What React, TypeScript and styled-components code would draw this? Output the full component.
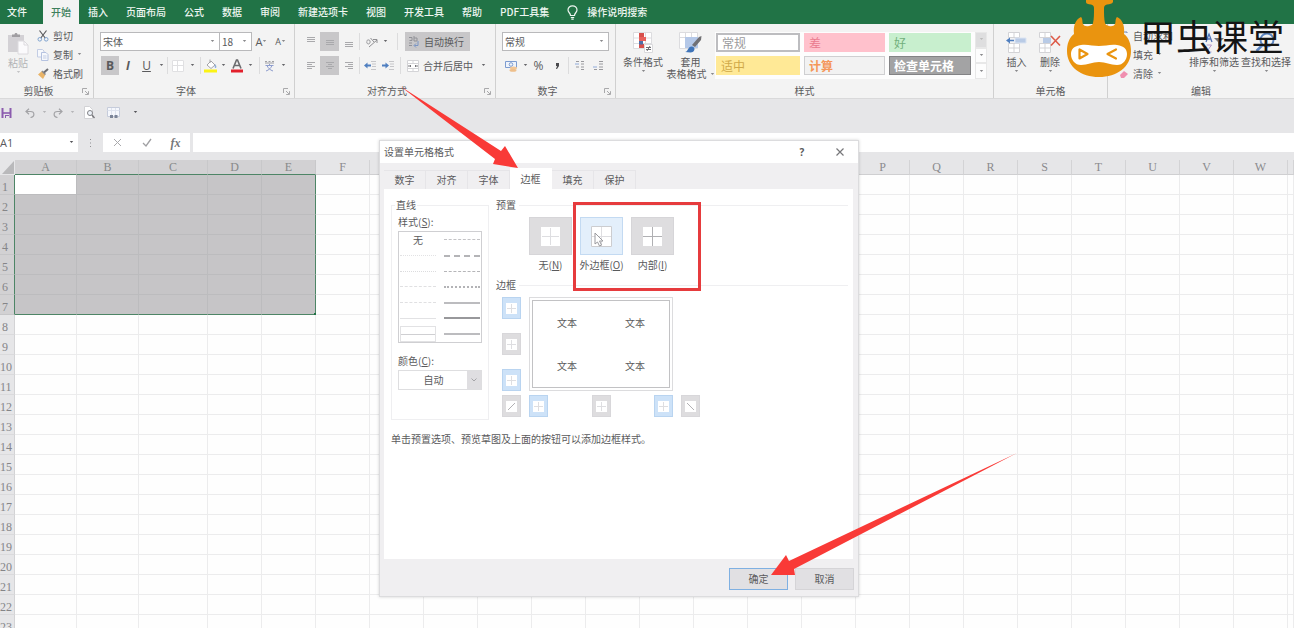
import React from "react";
import styled, { createGlobalStyle, css } from "styled-components";

const Global = createGlobalStyle`
  *, *::before, *::after { box-sizing: border-box; }
  html, body { margin: 0; padding: 0; }
  body {
    font-family: "Noto Sans CJK SC", "Noto Sans", sans-serif;
    font-size: 10px;
    line-height: 12px;
    color: #5a5a5c;
    background: #e6e6e8;
    overflow: hidden;
  }
  button, input, select {
    font: inherit;
    color: inherit;
    margin: 0;
    padding: 0;
    border: 0;
    border-radius: 0;
    background: transparent;
  }
  svg { display: block; flex: none; }
`;

const Page = styled.div`
  position: relative;
  display: flex;
  flex-direction: column;
  height: 100vh;
  overflow: hidden;
`;

/* ---------- ribbon tabs ---------- */
const TabBar = styled.nav`
  display: flex;
  align-items: stretch;
  height: 24px;
  flex: none;
  background: #217346;
  color: #eef6f1;
`;
const RibbonTab = styled.button<{ $active?: boolean; $file?: boolean }>`
  flex: none;
  padding: 0 9px;
  font-weight: 500;
  white-space: nowrap;
  ${(p) => p.$file && css`padding: 0 16px 0 7px;`}
  ${(p) => p.$active && css`
    padding: 0 8px;
    background: #f3f3f3;
    color: #3d7f5c;
  `}
`;
const TellMe = styled.button`
  display: flex;
  align-items: center;
  gap: 9px;
  padding: 0 9px;
  font-weight: 500;
`;

/* ---------- ribbon body ---------- */
const Ribbon = styled.div`
  display: flex;
  height: 75px;
  flex: none;
  background: #f3f3f3;
  border-bottom: 1px solid #d9d9da;
`;
const Group = styled.section<{ $w?: number; $tight?: boolean }>`
  display: flex;
  flex-direction: column;
  justify-content: space-between;
  padding: ${(p) => (p.$tight ? 2 : 8)}px 0 1px;
  ${(p) => (p.$w ? css`flex: 0 0 ${p.$w}px;` : css`flex: 1 0 0;`)}
  & + & { border-left: 1px solid #d0d0d0; }
`;
const GroupFoot = styled.div`
  display: flex;
  align-items: center;
  height: 12px;
`;
const GroupName = styled.span`
  flex: 1;
  text-align: center;
`;
const Launcher = styled.button`
  display: flex;
  width: 16px;
  justify-content: center;
`;
const Stack = styled.div<{ $gap?: number }>`
  display: flex;
  flex-direction: column;
  gap: ${(p) => p.$gap ?? 5}px;
`;
const Row = styled.div<{ $pad?: number }>`
  display: flex;
  align-items: center;
  padding-left: ${(p) => p.$pad ?? 0}px;
`;
const Body = styled.div<{ $pad?: number }>`
  display: flex;
  align-items: flex-start;
  padding-left: ${(p) => p.$pad ?? 0}px;
`;
const EditTools = styled(Stack)`
  width: 72px;
`;
const Tool = styled.button<{ $w?: number; $on?: boolean }>`
  display: flex;
  align-items: center;
  justify-content: center;
  width: ${(p) => p.$w ?? 19}px;
  height: 19px;
  font-size: 12px;
  background: ${(p) => (p.$on ? "#c8c7c9" : "transparent")};
`;
const TextTool = styled.button<{ $on?: boolean }>`
  display: flex;
  align-items: center;
  gap: 4px;
  height: 19px;
  padding: 0 6px 0 3px;
  white-space: nowrap;
  background: ${(p) => (p.$on ? "#c8c7c9" : "transparent")};
`;
const BigTool = styled.button<{ $w: number; $dim?: boolean; $drop?: boolean }>`
  display: flex;
  flex-direction: column;
  align-items: center;
  gap: 2px;
  width: ${(p) => p.$w}px;
  padding-top: ${(p) => (p.$drop ? 6 : 0)}px;
  white-space: nowrap;
  color: ${(p) => (p.$dim ? "#b4b4b6" : "inherit")};
`;
const LabelLine = styled.span`
  display: flex;
  align-items: center;
  gap: 3px;
`;
const Rule = styled.i<{ $m?: number }>`
  width: 1px;
  height: 17px;
  margin: 0 ${(p) => p.$m ?? 0}px;
  background: #dcdcdd;
`;
const Letter = styled.span<{ $s?: number; $b?: boolean; $i?: boolean; $u?: boolean }>`
  font-family: "Open Sans", "Noto Sans", sans-serif;
  font-size: ${(p) => p.$s ?? 12}px;
  line-height: 14px;
  font-weight: ${(p) => (p.$b ? 700 : 400)};
  font-style: ${(p) => (p.$i ? "italic" : "normal")};
  text-decoration: ${(p) => (p.$u ? "underline" : "none")};
`;
const FxLabel = styled.span`
  font: italic 700 12px/14px "Liberation Serif", serif;
  color: #77777a;
`;

const SelectBox = styled.span<{ $w: number }>`
  display: grid;
  align-items: center;
  width: ${(p) => p.$w}px;
  height: 19px;
  border: 1px solid #b9b9bb;
  background: #fff;
  & > * { grid-area: 1 / 1; }
  & > svg { justify-self: end; margin-right: 4px; pointer-events: none; }
  & + & { border-left: 0; }
`;
const PlainSelect = styled.select`
  appearance: none;
  width: 100%;
  height: 17px;
  padding-left: 2px;
  outline: none;
`;

const Gallery = styled.div`
  display: flex;
  height: 47px;
  background: #fdfdfd;
`;
const Swatches = styled.div`
  display: grid;
  grid-template-columns: 84px 81px 82px;
  grid-template-rows: 19px 19px;
  gap: 4px;
  padding: 1px 4px 0 1px;
`;
const Swatch = styled.button<{ $bg: string; $fg: string; $edge?: string; $bold?: boolean }>`
  padding-left: 4px;
  text-align: left;
  font-size: 12px;
  line-height: 15px;
  white-space: nowrap;
  background: ${(p) => p.$bg};
  color: ${(p) => p.$fg};
  border: 1px solid ${(p) => p.$edge ?? p.$bg};
  font-weight: ${(p) => (p.$bold ? 700 : 400)};
  &:first-child { border-width: 2px; }
`;
const Scroller = styled.div`
  display: grid;
  grid-template-rows: repeat(3, 1fr);
  width: 12px;
`;
const ScrollBtn = styled.button<{ $off?: boolean }>`
  display: flex;
  align-items: center;
  justify-content: center;
  background: ${(p) => (p.$off ? "#dededf" : "#fdfdfd")};
  border: 1px solid #e8e8e8;
`;

/* ---------- quick access and formula bar ---------- */
const QuickBar = styled.div`
  display: flex;
  align-items: center;
  height: 34px;
  flex: none;
  padding-bottom: 7px;
  background: #e6e6e8;
`;
const HistoryTools = styled.div`
  display: flex;
  padding-left: 7px;
`;
const QuickBtn = styled.button<{ $w: number }>`
  display: flex;
  align-items: center;
  justify-content: center;
  width: ${(p) => p.$w}px;
  height: 18px;
`;
const FormulaBar = styled.div`
  display: flex;
  align-items: stretch;
  height: 27px;
  flex: none;
  padding-bottom: 8px;
  background: #e6e6e8;
`;
const NameBox = styled.label`
  display: flex;
  align-items: center;
  width: 78px;
  padding-right: 4px;
  background: #fff;
`;
const NameInput = styled.input`
  width: 69px;
  font-family: "Open Sans", sans-serif;
  font-size: 11px;
  outline: none;
`;
const Dots = styled.span`
  display: flex;
  align-items: center;
  justify-content: center;
  width: 25px;
`;
const FxTools = styled.div`
  display: flex;
  align-items: center;
  width: 87px;
  background: #fff;
`;
const FormulaInput = styled.input`
  flex: 1;
  min-width: 0;
  margin-left: 3px;
  background: #fff;
  outline: none;
`;

/* ---------- sheet ---------- */
const SheetWrap = styled.main`
  flex: 1;
  min-height: 0;
  overflow: hidden;
  background: #fff;
`;
const Sheet = styled.table`
  table-layout: fixed;
  width: 100%;
  border-collapse: separate;
  border-spacing: 0;
`;
const ColHead = styled.th<{ $sel?: boolean }>`
  height: 15px;
  padding: 1px 0 0;
  font: 400 12px/13px "Liberation Serif", serif;
  color: ${(p) => (p.$sel ? "#87898a" : "#8b8b8e")};
  background: ${(p) => (p.$sel ? "#d2d1d3" : "#e6e6e8")};
  border-right: 1px solid ${(p) => (p.$sel ? "#c8c8ca" : "#d3d3d5")};
  border-bottom: 1px solid ${(p) => (p.$sel ? "#4d8566" : "#cfcfd1")};
`;
const Corner = styled.th`
  padding: 0 0 0 2px;
  background: #e6e6e8;
`;
const RowHead = styled.th<{ $sel?: boolean }>`
  height: 20px;
  padding: 6px 4px 0 0;
  font: 400 12px/13px "Liberation Serif", serif;
  color: #858588;
  background: ${(p) => (p.$sel ? "#d2d1d3" : "#e6e6e8")};
  border-right: 1px solid ${(p) => (p.$sel ? "#4d8566" : "#d3d3d5")};
  border-bottom: 1px solid ${(p) => (p.$sel ? "#c6c6c8" : "#dadadc")};
`;
const Cell = styled.td<{ $sel?: boolean; $active?: boolean; $right?: boolean; $bottom?: boolean }>`
  position: relative;
  height: 20px;
  padding: 0;
  background: ${(p) => (p.$active ? "#fff" : p.$sel ? "#c6c5c7" : "#fefefe")};
  border-right: 1px solid ${(p) => (p.$right ? "#4d8566" : p.$sel ? "#bcbcbe" : "#ececed")};
  border-bottom: 1px solid ${(p) => (p.$bottom ? "#4d8566" : p.$sel ? "#bcbcbe" : "#ececed")};
  ${(p) => p.$right && p.$bottom && css`
    &::after {
      content: "";
      position: absolute;
      right: -2px;
      bottom: -2px;
      width: 3px;
      height: 3px;
      background: #217346;
    }
  `}
`;

/* ---------- dialog ---------- */
const Dialog = styled.section`
  position: absolute;
  left: 379px;
  top: 140px;
  width: 480px;
  display: flex;
  flex-direction: column;
  background: #f0eff1;
  border: 1px solid #dcdcde;
  box-shadow: 0 0 3px rgba(0, 0, 0, 0.18);
`;
const TitleBar = styled.header`
  display: flex;
  align-items: center;
  height: 22px;
  padding: 0 0 0 4px;
  background: #fff;
`;
const Title = styled.h1`
  flex: 1;
  margin: 0;
  font-size: 10px;
  font-weight: 400;
`;
const TitleBtn = styled.button<{ $w: number }>`
  display: flex;
  align-items: center;
  justify-content: center;
  width: ${(p) => p.$w}px;
  height: 20px;
`;
const DialogTabs = styled.div`
  display: flex;
  align-items: flex-end;
  height: 26px;
  padding: 0 4px;
`;
const DialogTab = styled.button<{ $active?: boolean }>`
  width: 42px;
  height: ${(p) => (p.$active ? 21 : 19)}px;
  background: ${(p) => (p.$active ? "#fff" : "#f0eff1")};
  border: 1px solid ${(p) => (p.$active ? "#fff" : "#e6e5e8")};
  border-width: 1px 1px 0 0;
`;
const Panel = styled.div`
  height: 370px;
  margin: 0 5px 0 4px;
  padding: 10px 5px 0 7px;
  background: #fff;
`;
const PanelCols = styled.div`
  display: flex;
  gap: 7px;
`;
const LineBox = styled.fieldset`
  display: flex;
  flex-direction: column;
  width: 98px;
  height: 221px;
  min-width: 0;
  margin: 0;
  padding: 5px 6px 0;
  border: 1px solid #efeff1;
`;
const Legend = styled.legend`
  margin-left: -3px;
  padding: 0 1px;
`;
const StyleList = styled.div`
  display: grid;
  grid-template-columns: 1fr 1fr;
  grid-template-rows: repeat(7, 1fr);
  column-gap: 8px;
  height: 112px;
  margin: 3px 0 12px;
  padding: 0 1px;
  border: 1px solid #cfcfd2;
`;
const StyleOption = styled.button<{ $on?: boolean }>`
  display: flex;
  align-items: center;
  justify-content: center;
  border: ${(p) => (p.$on ? "1px solid #e2e2e4" : "0")};
`;
const Stroke = styled.i<{ $kind: string; $c: string; $h?: number }>`
  width: 100%;
  border-top: ${(p) => p.$h ?? 1}px ${(p) => p.$kind} ${(p) => p.$c};
`;
const ColorSelect = styled.span`
  display: grid;
  align-items: center;
  height: 20px;
  margin-top: 3px;
  border: 1px solid #dedee0;
  & > * { grid-area: 1 / 1; }
  & > i {
    display: flex;
    align-items: center;
    justify-content: center;
    justify-self: end;
    width: 14px;
    height: 18px;
    background: #dfdee1;
    pointer-events: none;
  }
  & select { text-align: center; padding-right: 15px; }
`;
const RightCol = styled.div`
  flex: 1;
  display: flex;
  flex-direction: column;
`;
const Heading = styled.h2`
  display: flex;
  align-items: center;
  gap: 3px;
  margin: 0;
  font-size: 10px;
  font-weight: 400;
  &::after { content: ""; flex: 1; height: 1px; background: #efeff1; }
`;
const Presets = styled.div`
  display: flex;
  gap: 8px;
  padding: 6px 0 8px 33px;
`;
const Preset = styled.button`
  display: flex;
  flex-direction: column;
  align-items: center;
  gap: 4px;
  width: 43px;
  white-space: nowrap;
`;
const PresetFace = styled.span<{ $on?: boolean }>`
  display: flex;
  align-items: center;
  justify-content: center;
  width: 43px;
  height: 38px;
  background: ${(p) => (p.$on ? "#e3effb" : "#dedddf")};
  border: 1px solid ${(p) => (p.$on ? "#c3daf2" : "#d6d5d8")};
`;
const BorderGrid = styled.div`
  display: grid;
  grid-template-columns: 19px 144px 19px;
  grid-template-rows: 94px 22px;
  gap: 4px 8px;
  padding: 6px 0 0 6px;
`;
const SideButtons = styled.div<{ $across?: boolean }>`
  display: flex;
  flex-direction: ${(p) => (p.$across ? "row" : "column")};
  justify-content: space-between;
`;
const EdgeBtn = styled.button<{ $on?: boolean }>`
  display: flex;
  align-items: center;
  justify-content: center;
  width: 19px;
  height: 22px;
  background: ${(p) => (p.$on ? "#cde2f8" : "#dedddf")};
  border: 1px solid ${(p) => (p.$on ? "#b9d4f0" : "#d8d7da")};
`;
const Preview = styled.div`
  grid-column: 2 / 4;
  width: 144px;
  height: 94px;
  padding: 2px;
  border: 1px solid #dcdcde;
`;
const PreviewInner = styled.div`
  display: grid;
  grid-template-columns: 1fr 1fr;
  grid-template-rows: 1fr 1fr;
  place-items: center;
  height: 100%;
  border: 1px solid #c2c2c4;
`;
const Hint = styled.p`
  margin: 13px 0 0;
`;
const Footer = styled.footer`
  display: flex;
  justify-content: flex-end;
  gap: 7px;
  padding: 9px 4px 6px;
`;
const ActionBtn = styled.button<{ $main?: boolean }>`
  width: 59px;
  height: 22px;
  background: #e1e0e3;
  border: 1px solid ${(p) => (p.$main ? "#7fb0e2" : "#d5d4d7")};
`;

/* ---------- overlays ---------- */
const Brand = styled.div`
  position: absolute;
  left: 1066px;
  top: 0;
  display: flex;
  align-items: flex-start;
  gap: 7px;
  pointer-events: none;
`;
const BrandName = styled.span`
  padding-top: 15px;
  font-size: 36px;
  line-height: 40px;
  color: #141414;
  white-space: nowrap;
`;
const Marks = styled.svg`
  position: absolute;
  left: 0;
  top: 0;
  width: 100%;
  height: 100%;
  pointer-events: none;
`;

/* ---------- icons ---------- */
const Ico = ({ w = 12, h = 12, children }: { w?: number; h?: number; children: React.ReactNode }) => (
  <svg width={w} height={h} viewBox={`0 0 ${w} ${h}`} fill="none" aria-hidden="true">{children}</svg>
);
const Caret = ({ c = "#8a8a8d" }: { c?: string }) => (
  <Ico w={5} h={3}><path d="M.8 0h3.4L2.5 2z" fill={c} /></Ico>
);
const CaretBtn = ({ w }: { w: number }) => <Tool $w={w} aria-label="更多"><Caret c="#66666a" /></Tool>;
const LauncherIcon = () => (
  <Ico w={7} h={7}><path d="M.5 5V.5H5M3 3l3 3M6.5 3.2v3.3H3.2" stroke="#a9a9ab" /></Ico>
);
const Lines = ({ rows, align = "c" }: { rows: number[][]; align?: string }) => (
  <Ico w={10} h={10}>
    {rows.map(([y, l], i) => (
      <rect key={i} x={align === "l" ? 1 : align === "r" ? 9 - l : 5 - l / 2} y={y} width={l} height={1} fill="#a9a9ac" />
    ))}
  </Ico>
);
const Paste = () => (
  <Ico w={22} h={23}>
    <path d="M1 3h16v17H1z" fill="#d3d1d5" />
    <path d="M5 5V2.500h2.500c.2-1.900 2.800-1.900 3 0H13V5z" fill="#a09ea2" />
    <path d="M11 9h6l4 4v9H11z" fill="#fbfafc" stroke="#dcdade" />
    <path d="M17 9v4h4" stroke="#dcdade" />
  </Ico>
);
const Cut = () => (
  <Ico>
    <path d="M2.500.5 8.200 8M9.500.5 3.800 8" stroke="#5b5b5e" strokeWidth="1.200" />
    <circle cx="2.800" cy="9.300" r="1.800" stroke="#7fa3cf" /><circle cx="9.200" cy="9.300" r="1.800" stroke="#7fa3cf" />
  </Ico>
);
const Copy = () => (
  <Ico>
    <path d="M.5.500h5l1.500 1.500v6H.5z" fill="#f6f8fc" stroke="#c3cde4" />
    <path d="M4.500 3.500h4.500l2 2v6H4.500z" fill="#f6f8fc" stroke="#b5c2e0" />
    <path d="M6 7h3.500M6 9h3.500" stroke="#c3cde4" />
  </Ico>
);
const Brush = () => (
  <Ico>
    <path d="M1 6.500 5 3l3.500 3.500L6 11z" fill="#e9b468" />
    <path d="m5 3 3.500 3.500" stroke="#8a8a8d" strokeWidth="1.500" /><path d="m7 4.500 4-3.500" stroke="#6e6e72" strokeWidth="2" />
  </Ico>
);
const Table = () => (
  <Ico>
    <rect width="12" height="12" fill="#fff" />
    <path d="M.5.500h11v11H.5zM5.500 0v12M0 5.500h12" stroke="#e0e0e2" />
  </Ico>
);
const Bucket = () => (
  <Ico w={13} h={14}>
    <path d="m3 6 4-4 4 4-4 3.500z" fill="#fff" stroke="#a4a4a7" /><path d="M6 4V.500" stroke="#a4a4a7" />
    <path d="M11 5c2 2 1.500 4 .5 4s-1-2-.5-4" fill="#8eaedb" />
    <path d="M0 10.500h13v3H0z" fill="#fbf315" />
  </Ico>
);
const FontColor = () => (
  <Ico w={12} h={14}>
    <path d="M2 9.500 5.500 1h1L10 9.500M3.300 6.500h5.400" stroke="#6b6b6e" strokeWidth="1.600" />
    <path d="M0 10.500h12v3H0z" fill="#e2202c" />
  </Ico>
);
const Phonetic = () => (
  <Ico w={11} h={13}>
    <path d="M1 2.500h2M4.500 2.500h2M8 2.500h2M1 4h9" stroke="#a0a0a4" />
    <path d="M1.500 6.500h8M5.500 5v1.500M8 6.500C7 9 5 11 2 12M3 6.500C4 9 6 11 9 12" stroke="#8e9dce" />
  </Ico>
);
const Orient = () => (
  <Ico w={13} h={12}>
    <path d="m4 11 8-7M1.500 5c2-2 4-1 3.500 1.500S1 8 2 5.500M5.500 2l3.500 4M8 3.500h4V7" stroke="#909093" />
  </Ico>
);
const Indent = ({ right }: { right?: boolean }) => (
  <Ico w={13} h={11}>
    <path d="M7 1.500h5M8 4h4M8 6.500h4M7 9.500h5" stroke="#c6c6c9" />
    <path d={right ? "M0 5.500h4" : "M3 5.500h4"} stroke="#4f7fc0" strokeWidth="2" />
    <path d={right ? "M7 5.500 3.500 2.500v6z" : "M0 5.500 3.500 2.500v6z"} fill="#4f7fc0" />
  </Ico>
);
const Wrap = () => (
  <Ico w={12} h={13}>
    <path d="M1 2.500h3v3H1.500M6 1v5h3V3H6M1 8h3M1 10.500h3" stroke="#909197" />
    <path d="M10 6v4.500H6.500M8 8.500l-2 2 2 2" stroke="#7a95c4" />
  </Ico>
);
const Merge = () => (
  <Ico>
    <path d="M.5.500h11v11H.5z" fill="#fff" />
    <path d="M.5.500h11v11H.5zM6 0v3M6 9v3M0 3.500h12M0 8.500h12" stroke="#d4d4d7" />
    <path d="M1 6h3M8 6h3M3 5l1 1-1 1M9 5 8 6l1 1" stroke="#77777b" />
  </Ico>
);
const Currency = () => (
  <Ico w={13} h={12}>
    <path d="M.5 1.500h11v6H.5z" stroke="#7d9cd0" fill="#eef3fb" /><circle cx="6" cy="4.500" r="1.800" stroke="#7d9cd0" />
    <ellipse cx="8.500" cy="8" rx="3.500" ry="1.500" fill="#f2c695" /><ellipse cx="8" cy="10.300" rx="3.500" ry="1.500" fill="#eebf8b" />
  </Ico>
);
const Decimal = ({ less }: { less?: boolean }) => (
  <Ico w={11} h={11}>
    <path d={less ? "M6 1.500h4M6 4h4M1 9.500h3M6 9.500h4M6 7h4" : "M2 1.500h3M7 1.500h3M7 4h3M2 7h3M7 7h3M7 9.500h3"} stroke="#9a9a9e" />
    <path d={less ? "M0 7h4" : "M1 4h4"} stroke="#8faada" />
  </Ico>
);
const CondFormat = () => (
  <Ico w={20} h={22}>
    <path d="M.5.500h18v16H.5zM6.500 0v17M12.500 0v17M0 6h19M0 11.500h19" stroke="#dcdcdf" fill="#fff" />
    <path d="M6 1h5v4H6zM6 12h5v4H6z" fill="#d7504c" /><path d="M6 5h7v4H6z" fill="#e8615c" /><path d="M6 9h4v3.500H6z" fill="#4d6fa9" />
    <path d="M11.500 12.500h8v8h-8z" fill="#fff" stroke="#dadadd" /><path d="M13 15.500h5M13 17.500h5M17 14l-3 5" stroke="#717175" />
  </Ico>
);
const TableFormat = () => (
  <Ico w={23} h={22}>
    <path d="M.5.500h18v16H.5zM6.500 0v17M12.500 0v17M0 5.500h19" stroke="#dcdcdf" fill="#fff" />
    <path d="M6 5h13v11H6z" fill="#b4c8e8" />
    <path d="m13 13 7-8 2.500-1-.5 4-6 7z" fill="#707074" /><path d="M6 20c3 0 3-6 7-5.500s3 6-1.500 6z" fill="#3f74b8" />
  </Ico>
);
const InsertCells = () => (
  <Ico w={21} h={22}>
    <path d="M2.500.500h11v5h-11zM2.500 11.500h11v9h-11zM8 0v5.500M8 11.500v9M2.500 16h11" stroke="#d3d3d6" fill="#fff" />
    <path d="M9 6h11v5H9z" fill="#b9cbe6" stroke="#dbe4f2" /><path d="M8 8.500H2" stroke="#4f7fc0" strokeWidth="1.500" /><path d="M0 8.500 4 5.500v6z" fill="#4f7fc0" />
  </Ico>
);
const DeleteCells = () => (
  <Ico w={22} h={22}>
    <path d="M.5.500h11v5H.5zM.5 11.500h11v9H.5zM6 0v5.500M6 11.500v9M.5 16h11" stroke="#d3d3d6" fill="#fff" />
    <path d="M4 6h8v5H4z" fill="#b9cbe6" /><path d="m12 4 9 9.500M21 4l-9 9.500" stroke="#dd5b49" strokeWidth="1.600" />
  </Ico>
);
const Sigma = () => <Ico w={10} h={10}><path d="M8 2V1H1l4 4-4 4h7V8" stroke="#6a86b8" /></Ico>;
const FillDown = () => <Ico w={10} h={10}><path d="M1.500.500h7v9h-7z" fill="#d9e4f4" stroke="#a9bddd" /><path d="M5 2v5M3 5l2 2 2-2" stroke="#4f7fc0" /></Ico>;
const Eraser = () => <Ico w={10} h={10}><path d="m1 6 4-4 4 3-4 4H2z" fill="#f08fb0" /></Ico>;
const SortFilter = () => (
  <Ico w={22} h={22}>
    <path d="m3 10 3-8 3 8M4 7h4" stroke="#5273b5" strokeWidth="1.300" /><path d="M3.500 13h5l-5 7h5" stroke="#b79aca" />
    <path d="M11 6h10l-4 4v6l-2-1.500V10z" fill="#77777b" />
  </Ico>
);
const Search = () => <Ico w={22} h={22}><circle cx="12" cy="8" r="6.500" stroke="#5d86c2" strokeWidth="2" /><path d="m7.500 13-6 6" stroke="#5d86c2" strokeWidth="2.500" /></Ico>;
const Bulb = () => (
  <Ico w={11} h={15}>
    <path d="M3.500 10.500C3.500 8 1 7.500 1 5a4.500 4.200 0 0 1 9 0c0 2.500-2.500 3-2.500 5.500zM3.800 12.500h3.400M4.300 14.200h2.400" stroke="#eef6f1" strokeWidth="1.200" />
  </Ico>
);
const Save = () => (
  <Ico w={11} h={10}>
    <path d="M1.500 0v10M9.500 0v10" stroke="#8b5cae" strokeWidth="2" />
    <path d="M2 5h7" stroke="#8b5cae" strokeWidth="1.600" /><path d="M4.500 7v3M4 7.500h4" stroke="#8b5cae" />
  </Ico>
);
const Undo = ({ flip }: { flip?: boolean }) => (
  <Ico w={10} h={10}>
    <g transform={flip ? "translate(10 0) scale(-1 1)" : undefined}>
      <path d="M4 .8 1 3.500 4 6.200M1 3.500h4.500c4.500 0 4.500 5.500 0 6" stroke="#a3a3a6" strokeWidth="1.200" />
    </g>
  </Ico>
);
const PrintPreview = () => (
  <Ico w={12} h={13}><path d="M1.500.500h5l3 3v9h-8z" fill="#fff" stroke="#d2d2d5" /><circle cx="7" cy="7" r="2.500" stroke="#818185" fill="#eef3fa" /><path d="m9 9 2.500 3" stroke="#77777b" strokeWidth="1.400" /></Ico>
);
const WindowTable = () => (
  <Ico w={13} h={12}><path d="M.5.500h12v9H.5z" fill="#f5f7fc" stroke="#c6ccdb" /><path d="M.5 3.500h12M4.500 1v8M8.500 1v8" stroke="#dde2ed" /><path d="M3 8h3v3H3zM7.500 8h3v3h-3z" fill="#7b8497" /></Ico>
);
const CellGrid = ({ s, kind = "none" }: { s: number; kind?: string }) => {
  const mid = Math.floor(s / 2) + 0.5;
  return (
    <Ico w={s} h={s}>
      <rect width={s} height={s} fill="#fff" />
      {kind === "diag" && <path d={`M2 ${s - 2} ${s - 2} 2`} stroke="#b1b0b3" />}
      {kind === "back" && <path d={`M2 2l${s - 4} ${s - 4}`} stroke="#b1b0b3" />}
      {(kind === "none" || kind === "outer") && <path d={`M${mid} 1v${s - 2}M1 ${mid}h${s - 2}`} stroke="#dedee1" />}
      {kind === "inner" && <path d={`M${mid} 0v${s}M0 ${mid}h${s}`} stroke="#b0b0b3" />}
      {kind === "outer" && <path d={`M.5.500h${s - 1}v${s - 1}H.5z`} stroke="#cccdd0" />}
      {kind === "outer" && <path d="M4 7v11l2.500-2 2 4 2-1-2-4h3.500z" fill="#fff" stroke="#9a9a9e" strokeLinejoin="round" />}
    </Ico>
  );
};

const Beetle = () => (
  <Ico w={67} h={79}>
    <path
      d="M20 0h27v2c-1 2-3 2-6 2.500-2 .5-3 1.500-3 3.500 0 6 0 11 1 15 .5 2 2 2.500 4 3 3 .5 5 0 6-2 1-2 0-5 2-7 5 2 8 8 7 17 5 4 7 10 7 17 0 16-14 26-32 26S1 67 1 51c0-7 2-13 7-17-1-9 2-15 7-17 2 2 1 5 2 7 1 2 3 2.500 6 2 2-.5 4-1 4-3 1-4 1-9 1-15 0-2-1-3-3-3.500-3-.5-5-.5-5-2.500z"
      fill="#ea940f"
    />
    <path d="M33 46c6 0 12-2 18-1 7 1 10 4 10 9 0 6-4 11-10 11-7 0-11-3-18-3s-11 3-18 3C9 65 5 60 5 54c0-5 3-8 10-9 6-1 12 1 18 1z" fill="#fff" />
    <path d="M13.500 49.500v9l8-4.500zM50 49.500l-8.500 4.500 8.500 4.500" stroke="#ea940f" strokeWidth="2.200" strokeLinejoin="round" strokeLinecap="round" />
  </Ico>
);

/* ---------- data ---------- */
const tabs = ["文件", "开始", "插入", "页面布局", "公式", "数据", "审阅", "新建选项卡", "视图", "开发工具", "帮助", "PDF工具集"];
const letters = "ABCDEFGHIJKLMNOPQRSTUVW".split("");
const widths = [62, 62, 69, 54, 54];
const rowNumbers = Array.from({ length: 23 }, (_, i) => i + 1);
const strokes: [string, string, number][][] = [
  [["", "", 1], ["dashed", "#c3c3c6", 1]],
  [["dotted", "#e2e2e4", 1], ["dashed", "#b4b4b7", 2]],
  [["dotted", "#dcdcde", 1], ["dashed", "#b5b5b8", 1]],
  [["dashed", "#e0e0e2", 1], ["dotted", "#b3b3b6", 2]],
  [["dashed", "#e0e0e2", 1], ["solid", "#bcbcbf", 2]],
  [["solid", "#e2e2e4", 1], ["solid", "#98989b", 2]],
  [["solid", "#cfcfd2", 1], ["solid", "#bcbcbf", 2]],
];

const Foot = ({ name, launcher = true }: { name: string; launcher?: boolean }) => (
  <GroupFoot>
    <GroupName>{name}</GroupName>
    {launcher && <Launcher aria-label={name}><LauncherIcon /></Launcher>}
  </GroupFoot>
);

const Picker = ({ label, value, w }: { label: string; value: string; w: number }) => (
  <SelectBox $w={w}>
    <PlainSelect aria-label={label} defaultValue={value}><option>{value}</option></PlainSelect>
    <Caret />
  </SelectBox>
);

function RibbonBody() {
  return (
    <Ribbon>
      <Group $w={93} $tight>
        <Body $pad={2}>
          <BigTool $w={32} $dim $drop><Paste /><span>粘贴</span><Caret c="#c4c4c6" /></BigTool>
          <Stack $gap={0}>
            <TextTool><Cut />剪切</TextTool>
            <TextTool><Copy />复制<Caret /></TextTool>
            <TextTool><Brush />格式刷</TextTool>
          </Stack>
        </Body>
        <Foot name="剪贴板" />
      </Group>

      <Group $w={201}>
        <Stack>
          <Row $pad={6}>
            <Picker label="字体" value="宋体" w={120} />
            <Picker label="字号" value="18" w={32} />
            <Tool aria-label="增大字号"><Letter $s={11}>A</Letter><Caret /></Tool>
            <Tool aria-label="减小字号"><Letter $s={9}>A</Letter><Caret /></Tool>
          </Row>
          <Row $pad={7}>
            <Tool $w={18} $on><Letter $b>B</Letter></Tool>
            <Tool $w={18}><Letter $b $i>I</Letter></Tool>
            <Tool $w={19}><Letter $u>U</Letter></Tool>
            <CaretBtn w={11} />
            <Rule />
            <Tool aria-label="边框"><Table /></Tool>
            <CaretBtn w={11} />
            <Rule $m={2} />
            <Tool $w={14} aria-label="填充颜色"><Bucket /></Tool>
            <CaretBtn w={13} />
            <Tool $w={14} aria-label="字体颜色"><FontColor /></Tool>
            <CaretBtn w={13} />
            <Rule $m={2} />
            <Tool $w={15} aria-label="拼音"><Phonetic /></Tool>
            <CaretBtn w={13} />
          </Row>
        </Stack>
        <Foot name="字体" />
      </Group>

      <Group $w={201}>
        <Stack>
          <Row $pad={6}>
            <Tool aria-label="顶端对齐"><Lines rows={[[0, 8], [2, 8], [4, 8]]} /></Tool>
            <Tool $on aria-label="垂直居中"><Lines rows={[[3, 8], [5, 8], [7, 8]]} /></Tool>
            <Tool aria-label="底端对齐"><Lines rows={[[5, 8], [7, 8], [9, 8]]} /></Tool>
            <Rule $m={1} />
            <Tool $w={20} aria-label="方向"><Orient /></Tool>
            <CaretBtn w={9} />
            <Rule $m={7} />
            <TextTool $on><Wrap />自动换行</TextTool>
          </Row>
          <Row $pad={6}>
            <Tool aria-label="左对齐"><Lines align="l" rows={[[1, 8], [3, 5], [5, 8], [7, 5]]} /></Tool>
            <Tool $on aria-label="居中"><Lines rows={[[1, 8], [3, 4], [5, 8], [7, 4]]} /></Tool>
            <Tool aria-label="右对齐"><Lines align="r" rows={[[1, 8], [3, 5], [5, 8], [7, 5]]} /></Tool>
            <Rule $m={1} />
            <Tool $w={18} aria-label="减少缩进"><Indent /></Tool>
            <Tool $w={18} aria-label="增加缩进"><Indent right /></Tool>
            <Rule $m={3} />
            <TextTool><Merge />合并后居中</TextTool>
            <CaretBtn w={9} />
          </Row>
        </Stack>
        <Foot name="对齐方式" />
      </Group>

      <Group $w={120}>
        <Stack>
          <Row $pad={6}><Picker label="数字格式" value="常规" w={107} /></Row>
          <Row $pad={6}>
            <Tool aria-label="货币"><Currency /></Tool>
            <CaretBtn w={8} />
            <Tool><Letter>%</Letter></Tool>
            <Tool aria-label="千位分隔"><Ico w={5} h={8}><path d="M1 1h3v3L2 7H1l1-3H1z" fill="#4a4a4d" /></Ico></Tool>
            <Rule $m={1} />
            <Tool aria-label="增加小数"><Decimal /></Tool>
            <Tool aria-label="减少小数"><Decimal less /></Tool>
          </Row>
        </Stack>
        <Foot name="数字" />
      </Group>

      <Group $w={378}>
        <Body $pad={4}>
          <BigTool $w={46}><CondFormat /><span>条件格式</span><Caret /></BigTool>
          <BigTool $w={49}>
            <TableFormat />
            <span>套用<LabelLine>表格格式<Caret /></LabelLine></span>
          </BigTool>
          <Gallery>
            <Swatches>
              <Swatch $bg="#fff" $fg="#9b9b9d" $edge="#bdbdc0">常规</Swatch>
              <Swatch $bg="#ffc1cc" $fg="#ea7a8e">差</Swatch>
              <Swatch $bg="#c8efce" $fg="#72b07c">好</Swatch>
              <Swatch $bg="#ffe996" $fg="#cfa848">适中</Swatch>
              <Swatch $bg="#f2f2f2" $fg="#f5975a" $edge="#cfcfd1" $bold>计算</Swatch>
              <Swatch $bg="#a3a3a4" $fg="#fff" $edge="#838385" $bold>检查单元格</Swatch>
            </Swatches>
            <Scroller>
              <ScrollBtn $off aria-label="上"><Caret c="#bbb" /></ScrollBtn>
              <ScrollBtn aria-label="下"><Caret /></ScrollBtn>
              <ScrollBtn aria-label="其他"><Caret /></ScrollBtn>
            </Scroller>
          </Gallery>
        </Body>
        <Foot name="样式" launcher={false} />
      </Group>

      <Group $w={114}>
        <Body $pad={6}>
          <BigTool $w={33}><InsertCells /><span>插入</span><Caret /></BigTool>
          <BigTool $w={34}><DeleteCells /><span>删除</span><Caret /></BigTool>
        </Body>
        <Foot name="单元格" launcher={false} />
      </Group>

      <Group $tight>
        <Body $pad={8}>
          <EditTools $gap={0}>
            <TextTool><Sigma />自动求和</TextTool>
            <TextTool><FillDown />填充<Caret /></TextTool>
            <TextTool><Eraser />清除<Caret /></TextTool>
          </EditTools>
          <BigTool $w={52} $drop><SortFilter /><span>排序和筛选</span><Caret /></BigTool>
          <BigTool $w={52} $drop><Search /><span>查找和选择</span><Caret /></BigTool>
        </Body>
        <Foot name="编辑" launcher={false} />
      </Group>
    </Ribbon>
  );
}

function Spreadsheet() {
  return (
    <SheetWrap>
      <Sheet>
        <colgroup>
          <col style={{ width: 15 }} />
          {letters.map((l, i) => <col key={l} style={{ width: widths[i] ?? 54 }} />)}
          <col />
        </colgroup>
        <thead>
          <tr>
            <Corner aria-label="全选"><Ico w={12} h={13}><path d="M12 0v13H0z" fill="#b9b9bb" /></Ico></Corner>
            {letters.map((l, i) => <ColHead key={l} scope="col" $sel={i < 5}>{l}</ColHead>)}
            <ColHead />
          </tr>
        </thead>
        <tbody>
          {rowNumbers.map((r) => (
            <tr key={r}>
              <RowHead scope="row" $sel={r < 8}>{r}</RowHead>
              {letters.map((l, i) => {
                const sel = i < 5 && r < 8;
                return (
                  <Cell key={l} $sel={sel} $active={i === 0 && r === 1} $right={sel && i === 4} $bottom={sel && r === 7} />
                );
              })}
              <Cell />
            </tr>
          ))}
        </tbody>
      </Sheet>
    </SheetWrap>
  );
}

function FormatDialog() {
  return (
    <Dialog role="dialog" aria-label="设置单元格格式">
      <TitleBar>
        <Title>设置单元格格式</Title>
        <TitleBtn $w={38}><Letter $s={10} $b>?</Letter></TitleBtn>
        <TitleBtn $w={37} aria-label="关闭"><Ico w={8} h={8}><path d="m.5.500 7 7M7.500.500l-7 7" stroke="#77777a" strokeWidth="1.200" /></Ico></TitleBtn>
      </TitleBar>
      <DialogTabs>
        {["数字", "对齐", "字体", "边框", "填充", "保护"].map((t) => (
          <DialogTab key={t} $active={t === "边框"}>{t}</DialogTab>
        ))}
      </DialogTabs>
      <Panel>
        <PanelCols>
          <LineBox>
            <Legend>直线</Legend>
            <span>样式(<u>S</u>):</span>
            <StyleList>
              {strokes.map((pair, r) =>
                pair.map(([kind, c, h], i) => (
                  <StyleOption key={`${r}-${i}`} $on={r === 6 && i === 0} aria-label={kind ? `线条 ${r + 1}-${i + 1}` : undefined}>
                    {kind ? <Stroke $kind={kind} $c={c} $h={h} /> : "无"}
                  </StyleOption>
                ))
              )}
            </StyleList>
            <label htmlFor="line-color">颜色(<u>C</u>):</label>
            <ColorSelect>
              <PlainSelect id="line-color" defaultValue="自动"><option>自动</option></PlainSelect>
              <i><Ico w={6} h={4}><path d="m.5.500 2.500 2.500L5.500.500" stroke="#a5a5a8" /></Ico></i>
            </ColorSelect>
          </LineBox>
          <RightCol>
            <Heading>预置</Heading>
            <Presets>
              <Preset><PresetFace><CellGrid s={19} /></PresetFace><span>无(<u>N</u>)</span></Preset>
              <Preset><PresetFace $on><CellGrid s={21} kind="outer" /></PresetFace><span>外边框(<u>O</u>)</span></Preset>
              <Preset><PresetFace><CellGrid s={19} kind="inner" /></PresetFace><span>内部(<u>I</u>)</span></Preset>
            </Presets>
            <Heading>边框</Heading>
            <BorderGrid>
              <SideButtons>
                <EdgeBtn $on aria-label="上边框"><CellGrid s={11} /></EdgeBtn>
                <EdgeBtn aria-label="水平内边框"><CellGrid s={11} /></EdgeBtn>
                <EdgeBtn $on aria-label="下边框"><CellGrid s={11} /></EdgeBtn>
              </SideButtons>
              <Preview>
                <PreviewInner>
                  <span>文本</span><span>文本</span><span>文本</span><span>文本</span>
                </PreviewInner>
              </Preview>
              <EdgeBtn aria-label="斜线向上"><CellGrid s={11} kind="diag" /></EdgeBtn>
              <SideButtons $across>
                <EdgeBtn $on aria-label="左边框"><CellGrid s={11} /></EdgeBtn>
                <EdgeBtn aria-label="垂直内边框"><CellGrid s={11} /></EdgeBtn>
                <EdgeBtn $on aria-label="右边框"><CellGrid s={11} /></EdgeBtn>
              </SideButtons>
              <EdgeBtn aria-label="斜线向下"><CellGrid s={11} kind="back" /></EdgeBtn>
            </BorderGrid>
          </RightCol>
        </PanelCols>
        <Hint>单击预置选项、预览草图及上面的按钮可以添加边框样式。</Hint>
      </Panel>
      <Footer>
        <ActionBtn $main>确定</ActionBtn>
        <ActionBtn>取消</ActionBtn>
      </Footer>
    </Dialog>
  );
}

export default function App() {
  return (
    <Page>
      <Global />
      <TabBar>
        {tabs.map((t, i) => <RibbonTab key={t} $file={i === 0} $active={i === 1}>{t}</RibbonTab>)}
        <TellMe><Bulb />操作说明搜索</TellMe>
      </TabBar>
      <RibbonBody />
      <QuickBar>
        <QuickBtn $w={12} aria-label="保存"><Save /></QuickBtn>
        <HistoryTools>
          <QuickBtn $w={22} aria-label="撤消"><Undo /></QuickBtn>
          <QuickBtn $w={6} aria-label="撤消列表"><Caret c="#b5b5b8" /></QuickBtn>
          <QuickBtn $w={22} aria-label="恢复"><Undo flip /></QuickBtn>
          <QuickBtn $w={6} aria-label="恢复列表"><Caret c="#b5b5b8" /></QuickBtn>
        </HistoryTools>
        <QuickBtn $w={28} aria-label="打印预览"><PrintPreview /></QuickBtn>
        <QuickBtn $w={20} aria-label="窗口"><WindowTable /></QuickBtn>
        <QuickBtn $w={24} aria-label="自定义"><Caret c="#55555a" /></QuickBtn>
      </QuickBar>
      <FormulaBar>
        <NameBox><NameInput aria-label="名称框" defaultValue="A1" /><Caret c="#55555a" /></NameBox>
        <Dots><Ico w={3} h={10}><path d="M1 1h1v1H1zM1 4.500h1v1H1zM1 8h1v1H1z" fill="#909093" /></Ico></Dots>
        <FxTools>
          <QuickBtn $w={29} aria-label="取消"><Ico w={9} h={9}><path d="m1 1 7 7M8 1 1 8" stroke="#a9a9ac" /></Ico></QuickBtn>
          <QuickBtn $w={29} aria-label="输入"><Ico w={10} h={9}><path d="m1 5 3 3 5-7" stroke="#a0a0a3" strokeWidth="1.300" /></Ico></QuickBtn>
          <QuickBtn $w={29}><FxLabel>fx</FxLabel></QuickBtn>
        </FxTools>
        <FormulaInput aria-label="编辑栏" />
      </FormulaBar>
      <Spreadsheet />
      <FormatDialog />
      <Brand><Beetle /><BrandName>甲虫课堂</BrandName></Brand>
      <Marks aria-hidden="true">
        <rect x="574.500" y="203.500" width="125" height="86" fill="none" stroke="#e63b3d" strokeWidth="3" />
        <path d="M400 86 501 151 505 146 518 168 493 164 495 159Z" fill="#f93a37" />
        <path d="M1017 453 789 561 786 555 771 575 795 575 794 569Z" fill="#f93a37" />
      </Marks>
    </Page>
  );
}
